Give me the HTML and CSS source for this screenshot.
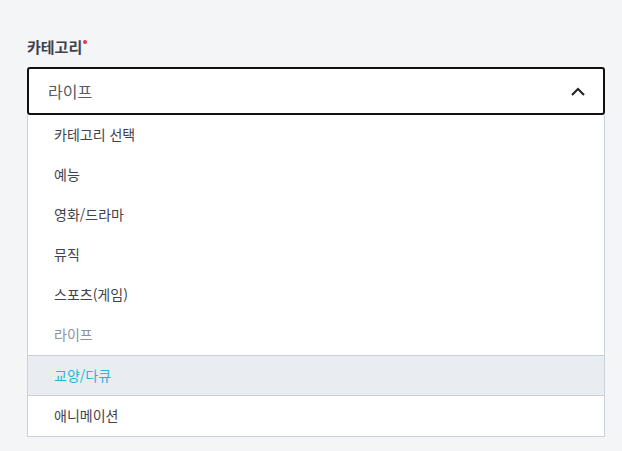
FILE: index.html
```html
<!DOCTYPE html>
<html lang="ko">
<head>
<meta charset="utf-8">
<link rel="stylesheet" href="styles.css">
</head>
<body>
<div class="field">
  <div class="label">카테고리<span class="req"></span></div>
  <div class="select">
    <span class="value">라이프</span>
    <svg class="chev" width="14" height="9" viewBox="0 0 14 9"><path d="M1 8 L7 2 L13 8" fill="none" stroke="#222" stroke-width="2"/></svg>
  </div>
  <ul class="list">
    <li>카테고리 선택</li>
    <li>예능</li>
    <li>영화/드라마</li>
    <li>뮤직</li>
    <li>스포츠(게임)</li>
    <li class="current">라이프</li>
    <li class="hover">교양/다큐</li>
    <li>애니메이션</li>
  </ul>
</div>
</body>
</html>
```
FILE: styles.css
```css
html, body { margin: 0; padding: 0; }
body {
  background: #f4f5f7;
  font-family: "Noto Sans CJK KR", "Noto Sans", sans-serif;
  width: 622px;
  height: 451px;
  overflow: hidden;
}
.field {
  padding: 34px 17px 0 27px;
}
.label {
  font-size: 15px;
  font-weight: 700;
  color: #3d414d;
  line-height: 22px;
  position: relative;
  display: inline-block;
}
.req {
  position: absolute;
  right: -5px;
  top: 4px;
  width: 4px;
  height: 4px;
  border-radius: 50%;
  background: #f2304b;
}
.select {
  margin-top: 9px;
  height: 48px;
  box-sizing: border-box;
  border: 2px solid #111;
  border-radius: 3px;
  background: #fff;
  display: flex;
  align-items: center;
  justify-content: space-between;
  padding: 0 18px 0 19px;
}
.value {
  font-size: 16px;
  color: #555a66;
}
.chev { display: block; margin-top: 1px; }
.list {
  list-style: none;
  margin: 0;
  padding: 0;
  background: #fff;
  border: 1px solid #c9d0dc;
  border-top: none;
}
.list li {
  height: 40px;
  line-height: 38px;
  padding-left: 26px;
  font-size: 14px;
  color: #3f434d;
  box-sizing: border-box;
}
.list li.current { color: #8a91a3; }
.list li.hover {
  height: 41px;
  background: #e9edf2;
  color: #1fb8d8;
  border-top: 1px solid #c9d0dc;
  border-bottom: 1px solid #c9d0dc;
}
```
